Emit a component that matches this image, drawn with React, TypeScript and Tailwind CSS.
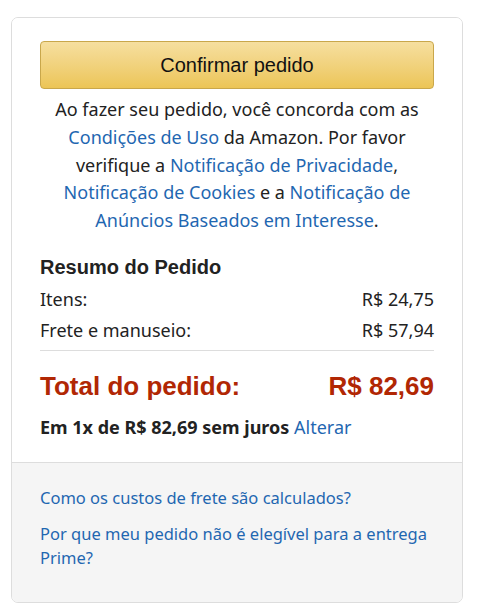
export default function App() {
  const body = { fontFamily: '"Noto Sans", "Open Sans", sans-serif' };
  const arial = { fontFamily: '"Liberation Sans", Arial, sans-serif' };
  return (
    <div className="w-[500px] h-[615px] bg-white pt-[17px] pl-[11px]">
      <div className="w-[452px] h-[586px] border border-[#dddddd] rounded-[7px] overflow-hidden flex flex-col" style={body}>
        <div className="px-[28px] pt-[23px] pb-[21px] bg-white">
          <button
            className="w-full h-[48px] rounded-[4px] border border-[#c9a74b] bg-gradient-to-b from-[#f6df9f] to-[#ecc556] text-[20px] text-[#111] flex items-center justify-center"
            style={arial}
          >
            Confirmar pedido
          </button>
          <p className="mt-[7px] text-center text-[18px] leading-[27.8px] text-[#222]">
            Ao fazer seu pedido, você concorda com as{" "}
            <span className="text-[#1f67b1]">Condições de Uso</span> da Amazon. Por favor
            verifique a <span className="text-[#1f67b1]">Notificação de Privacidade</span>,{" "}
            <span className="text-[#1f67b1]">Notificação de Cookies</span> e a{" "}
            <span className="text-[#1f67b1]">Notificação de Anúncios Baseados em Interesse</span>.
          </p>
          <h2 className="mt-[18px] text-[20px] leading-[28px] font-bold text-[#222]" style={arial}>
            Resumo do Pedido
          </h2>
          <div className="mt-[3px] flex justify-between text-[18px] leading-[31px] text-[#222]">
            <span>Itens:</span>
            <span>R$ 24,75</span>
          </div>
          <div className="flex justify-between text-[18px] leading-[31px] text-[#222]">
            <span>Frete e manuseio:</span>
            <span>R$ 57,94</span>
          </div>
          <div className="mt-[4px] h-px bg-[#dddddd]" />
          <div className="mt-[17px] flex justify-between text-[26px] leading-[36px] font-bold text-[#b12704]" style={arial}>
            <span>Total do pedido:</span>
            <span>R$ 82,69</span>
          </div>
          <p className="mt-[9px] text-[18px] leading-[28px] text-[#222]">
            <span className="font-bold">Em 1x de R$ 82,69 sem juros</span>{" "}
            <span className="text-[#1f67b1]">Alterar</span>
          </p>
        </div>
        <div className="flex-1 border-t border-[#dddddd] bg-[#f5f5f5] px-[28px] pt-[21px]">
          <p className="text-[16.5px] leading-[28px] text-[#1f67b1]">Como os custos de frete são calculados?</p>
          <p className="mt-[10px] text-[16.5px] leading-[24px] text-[#1f67b1]">
            Por que meu pedido não é elegível para a entrega Prime?
          </p>
        </div>
      </div>
    </div>
  );
}
